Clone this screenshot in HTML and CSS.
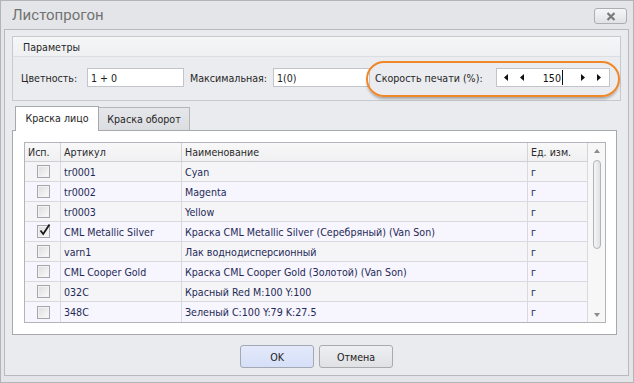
FILE: index.html
```html
<!DOCTYPE html>
<html>
<head>
<meta charset="utf-8">
<link rel="stylesheet" href="styles.css">
</head>
<body>
<div class="window">
  <div class="titlebar">
    <span class="title">Листопрогон</span>
    <div class="close"><svg width="10" height="9" viewBox="0 0 10 9"><path d="M1.5 1 L8.5 8 M8.5 1 L1.5 8" stroke="#7a7a7a" stroke-width="2.2" fill="none"/></svg></div>
  </div>
  <div class="client">
    <div class="group">
      <div class="group-head">Параметры</div>
      <div class="group-body">
        <span class="lbl lbl1">Цветность:</span>
        <div class="input in1">1 + 0</div>
        <span class="lbl lbl2">Максимальная:</span>
        <div class="input in2">1(0)</div>
        <span class="lbl lbl3">Скорость печати (%):</span>
        <div class="input spin">
          <span class="arr"><svg width="4" height="7" viewBox="0 0 4 7"><path d="M4 0 L0 3.5 L4 7 Z" fill="#111"/></svg></span>
          <span class="arr"><svg width="4" height="7" viewBox="0 0 4 7"><path d="M4 0 L0 3.5 L4 7 Z" fill="#111"/></svg></span>
          <span class="val">150</span>
          <span class="caret"></span>
          <span class="spacer"></span>
          <span class="arr"><svg width="4" height="7" viewBox="0 0 4 7"><path d="M0 0 L4 3.5 L0 7 Z" fill="#111"/></svg></span>
          <span class="arr"><svg width="4" height="7" viewBox="0 0 4 7"><path d="M0 0 L4 3.5 L0 7 Z" fill="#111"/></svg></span>
        </div>
      </div>
      <div class="highlight"></div>
    </div>

    <div class="tabs">
      <div class="tab active">Краска лицо</div>
      <div class="tab">Краска оборот</div>
    </div>
    <div class="panel">
      <div class="grid">
        <div class="table">
          <div class="row head">
            <div class="c c1">Исп.</div>
            <div class="c c2">Артикул</div>
            <div class="c c3">Наименование</div>
            <div class="c c4">Ед. изм.</div>
          </div>
          <div class="row odd">
            <div class="c c1 cb"><span class="box"></span></div>
            <div class="c c2">tr0001</div>
            <div class="c c3">Cyan</div>
            <div class="c c4">г</div>
          </div>
          <div class="row even">
            <div class="c c1 cb"><span class="box"></span></div>
            <div class="c c2">tr0002</div>
            <div class="c c3">Magenta</div>
            <div class="c c4">г</div>
          </div>
          <div class="row odd">
            <div class="c c1 cb"><span class="box"></span></div>
            <div class="c c2">tr0003</div>
            <div class="c c3">Yellow</div>
            <div class="c c4">г</div>
          </div>
          <div class="row even">
            <div class="c c1 cb"><span class="box checked"><svg width="13" height="14" viewBox="0 0 13 14"><path d="M2.5 7.5 L5.2 11 L11.5 1.5" stroke="#1a1a1a" stroke-width="1.8" fill="none"/></svg></span></div>
            <div class="c c2">CML Metallic Silver</div>
            <div class="c c3">Краска CML Metallic Silver (Серебряный) (Van Son)</div>
            <div class="c c4">г</div>
          </div>
          <div class="row odd">
            <div class="c c1 cb"><span class="box"></span></div>
            <div class="c c2">varn1</div>
            <div class="c c3">Лак воднодисперсионный</div>
            <div class="c c4">г</div>
          </div>
          <div class="row even">
            <div class="c c1 cb"><span class="box"></span></div>
            <div class="c c2">CML Cooper Gold</div>
            <div class="c c3">Краска CML Cooper Gold (Золотой) (Van Son)</div>
            <div class="c c4">г</div>
          </div>
          <div class="row odd">
            <div class="c c1 cb"><span class="box"></span></div>
            <div class="c c2">032C</div>
            <div class="c c3">Красный Red M:100 Y:100</div>
            <div class="c c4">г</div>
          </div>
          <div class="row even last">
            <div class="c c1 cb"><span class="box"></span></div>
            <div class="c c2">348C</div>
            <div class="c c3">Зеленый C:100 Y:79 K:27.5</div>
            <div class="c c4">г</div>
          </div>
        </div>
        <div class="scrollbar">
          <svg class="sb-up" width="6" height="4" viewBox="0 0 6 4"><path d="M0 4 L3 0 L6 4 Z" fill="#8c8c8c"/></svg>
          <div class="thumb"></div>
          <svg class="sb-down" width="6" height="4" viewBox="0 0 6 4"><path d="M0 0 L3 4 L6 0 Z" fill="#8c8c8c"/></svg>
        </div>
      </div>
    </div>

    <div class="buttons">
      <div class="btn ok">OK</div>
      <div class="btn">Отмена</div>
    </div>
  </div>
</div>
</body>
</html>
```

FILE: styles.css
```css
html, body {
  margin: 0;
  padding: 0;
  background: #e6e7ea;
}
* { box-sizing: border-box; }

.window {
  width: 634px;
  height: 383px;
  border: 1px solid #b3b4b8;
  background: #e4e5e8;
  display: flex;
  flex-direction: column;
  font-family: "DejaVu Sans Condensed", "DejaVu Sans", sans-serif;
  font-size: 10.6px;
  color: #222;
}

.titlebar {
  height: 28px;
  display: flex;
  justify-content: space-between;
  align-items: flex-start;
  flex-shrink: 0;
}
.title {
  font-family: Roboto, "Open Sans", sans-serif;
  font-size: 15px;
  color: #727272;
  margin: 5px 0 0 11px;
}
.close {
  width: 33px;
  height: 16px;
  margin: 7px 6px 0 0;
  border: 1px solid #adaeb2;
  border-radius: 3px;
  background: linear-gradient(#f6f6f7, #e1e2e5);
  display: flex;
  align-items: center;
  justify-content: center;
}

.client {
  margin: 0 4px 0 3px;
  height: 347px;
  border: 1px solid #b9babe;
  background: #eaebee;
  display: flex;
  flex-direction: column;
}

.group {
  position: relative;
  margin: 6px 0 0 7px;
  width: 609px;
  height: 65px;
  border: 1px solid #c8c9cd;
  background: #ebecef;
  display: flex;
  flex-direction: column;
}
.group-head {
  height: 20px;
  background: linear-gradient(#f5f6f7, #eff0f2);
  border-bottom: 1px solid #dcdde0;
  padding-left: 10px;
  display: flex;
  align-items: center;
  color: #262626;
}
.group-body {
  display: flex;
  align-items: center;
  padding: 11px 0 0 8px;
}
.lbl {
  white-space: nowrap;
  color: #262626;
}
.lbl1 { width: 66px; }
.lbl2 { width: 83px; }
.lbl3 { width: 121px; }
.input {
  height: 19px;
  background: #fff;
  border: 1px solid #c3c4c9;
  display: flex;
  align-items: center;
  padding-left: 3px;
  color: #222;
}
.in1 { width: 97px; margin-right: 6px; }
.in2 { width: 97px; margin-right: 5px; }
.spin {
  width: 114px;
  padding-left: 1px;
}
.arr {
  width: 16px;
  height: 17px;
  display: flex;
  align-items: center;
  justify-content: center;
}
.val {
  width: 31px;
  text-align: right;
  color: #111;
}
.caret {
  width: 1px;
  height: 15px;
  background: #111;
  margin-left: 1px;
}
.spacer { width: 12px; }

.highlight {
  position: absolute;
  left: 353px;
  top: 24px;
  width: 254px;
  height: 36px;
  border: 2px solid #f0882a;
  border-radius: 18px;
  box-shadow: 0 3px 3px -1px rgba(0, 0, 0, 0.3);
  pointer-events: none;
}

.tabs {
  display: flex;
  align-items: flex-end;
  height: 25px;
  margin: 5px 0 -1px 10px;
  position: relative;
  z-index: 1;
}
.tab {
  height: 23px;
  width: 92px;
  border: 1px solid #b4b5b9;
  border-bottom: none;
  background: linear-gradient(#e6e7ea, #dcdde1);
  display: flex;
  align-items: center;
  justify-content: center;
  color: #262626;
  margin-bottom: 1px;
  margin-left: -1px;
}
.tab.active {
  height: 25px;
  width: 84px;
  background: #fff;
  border-color: #a8a9ad;
  margin-bottom: 0;
  margin-left: 0;
  padding-bottom: 2px;
  position: relative;
  z-index: 2;
}

.panel {
  margin-left: 7px;
  width: 605px;
  height: 205px;
  border: 1px solid #a8a9ad;
  background: #fff;
  padding: 11px 10px 11px 11px;
}

.grid {
  width: 582px;
  height: 181px;
  border: 1px solid #b2b4b9;
  display: flex;
}
.table {
  width: 563px;
  display: flex;
  flex-direction: column;
}
.row {
  display: flex;
  height: 20px;
  border-bottom: 1px solid #d9dade;
  color: #1f2a58;
}
.row.last { border-bottom: none; }
.row.head {
  height: 19px;
  background: linear-gradient(#f8f8f9, #f0f0f2);
  border-bottom: 1px solid #cfd0d4;
  color: #2a2a2a;
}
.row.odd { background: #f5f5f7; }
.row.even { background: #f7f5fd; }
.c {
  border-right: 1px solid #d9dade;
  padding-left: 3px;
  display: flex;
  align-items: center;
  white-space: nowrap;
  overflow: hidden;
}
.head .c { border-right-color: #d3d4d8; }
.c1 { width: 36px; }
.c2 { width: 121px; }
.c3 { width: 346px; }
.c4 { width: 60px; }
.cb {
  justify-content: center;
  padding-left: 1px;
}
.box {
  width: 13px;
  height: 13px;
  border: 1px solid #a5a6a9;
  background: linear-gradient(135deg, #dcdcde, #fbfbfb);
  box-shadow: inset 0 0 0 1px #f3f3f4;
  position: relative;
}
.box svg {
  position: absolute;
  left: 0;
  top: -3px;
}

.scrollbar {
  width: 17px;
  background: #f7f7f8;
  display: flex;
  flex-direction: column;
  align-items: center;
}
.sb-up { margin-top: 6px; }
.thumb {
  width: 8px;
  height: 89px;
  margin-top: 7px;
  border: 1px solid #b3b4b8;
  border-radius: 4px;
  background: linear-gradient(90deg, #f6f6f7, #e0e1e4);
}
.sb-down { margin-top: auto; margin-bottom: 5px; }

.buttons {
  display: flex;
  justify-content: center;
  gap: 5px;
  margin-top: 10px;
}
.btn {
  width: 74px;
  height: 23px;
  border: 1px solid #a9aaae;
  border-radius: 3px;
  background: linear-gradient(#eeeff1, #e0e1e4);
  display: flex;
  align-items: center;
  justify-content: center;
  color: #222;
}
.btn.ok {
  background: linear-gradient(#e4eafb, #d5dff8);
  border-color: #a4a8b4;
}
```
